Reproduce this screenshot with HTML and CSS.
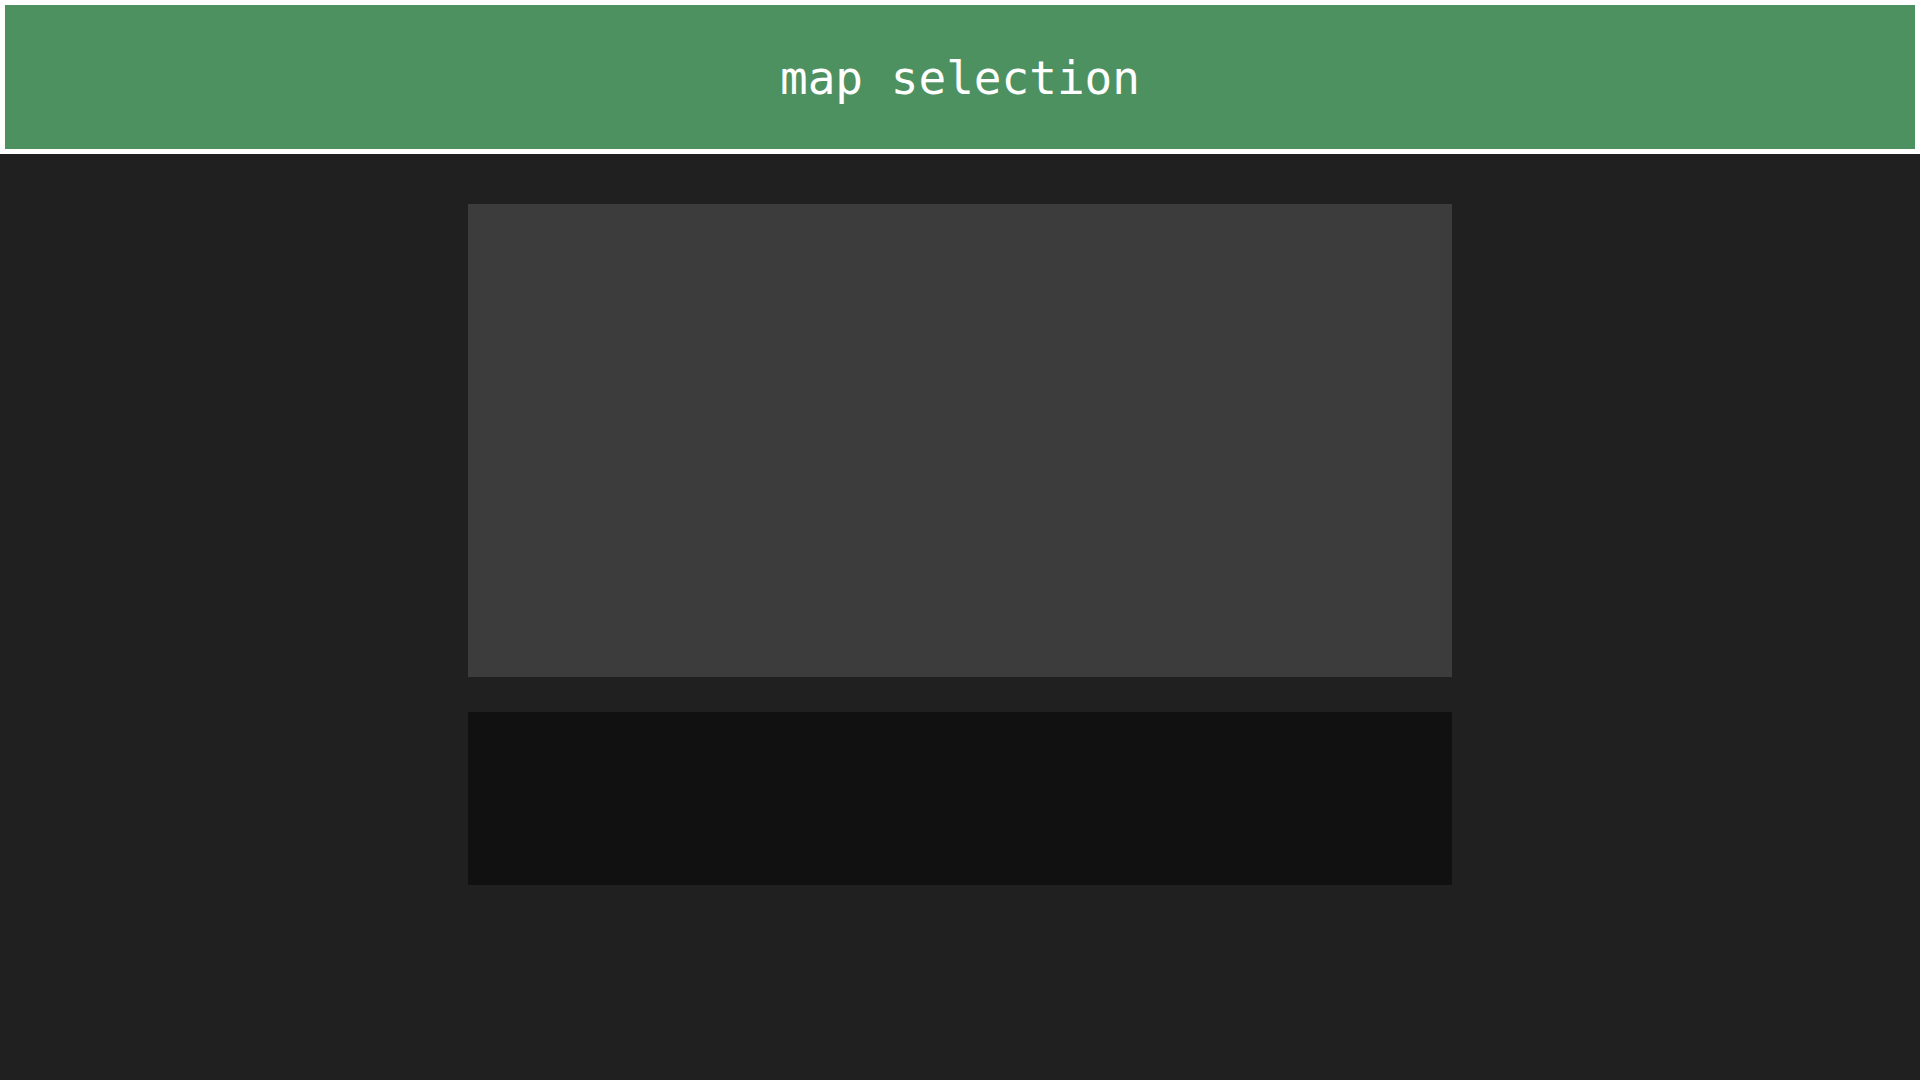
FILE: index.html
```html
<!DOCTYPE html>
<html lang="en">
<head>
<meta charset="utf-8">
<title>map selection</title>
<link rel="stylesheet" href="styles.css">
</head>
<body>
<header class="topbar">
  <h1 class="title">map selection</h1>
</header>
<main class="content">
  <section class="map-preview"></section>
  <section class="map-list"></section>
</main>
</body>
</html>
```
FILE: styles.css
```css
html, body {
  margin: 0;
  padding: 0;
  height: 100%;
}
body {
  background: #202020;
  font-family: "DejaVu Sans Mono", monospace;
  display: flex;
  flex-direction: column;
}
.topbar {
  border: 5px solid #ffffff;
  background: #4e9160;
  height: 144px;
  display: flex;
  align-items: center;
  justify-content: center;
  flex: none;
}
.title {
  margin: 0;
  color: #ffffff;
  font-size: 46px;
  font-weight: normal;
  line-height: 1;
  padding-top: 1px;
}
.content {
  display: flex;
  flex-direction: column;
  align-items: center;
  gap: 35px;
  padding-top: 50px;
}
.map-preview {
  width: 984px;
  height: 473px;
  background: #3c3c3c;
}
.map-list {
  width: 984px;
  height: 173px;
  background: #111111;
}
```
